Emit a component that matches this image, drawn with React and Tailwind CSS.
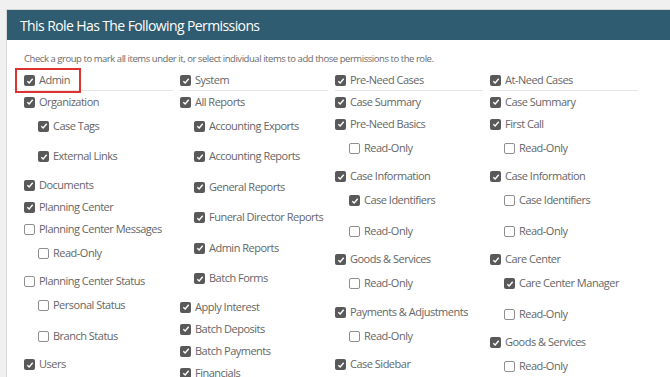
import React from "react";

const columns = [
  {
    title: "Admin",
    flagged: true,
    items: [
      { label: "Organization", checked: true, children: [
        { label: "Case Tags", checked: true },
        { label: "External Links", checked: true },
      ] },
      { label: "Documents", checked: true },
      { label: "Planning Center", checked: true },
      { label: "Planning Center Messages", checked: false, children: [
        { label: "Read-Only", checked: false },
      ] },
      { label: "Planning Center Status", checked: false, children: [
        { label: "Personal Status", checked: false },
        { label: "Branch Status", checked: false },
      ] },
      { label: "Users", checked: true },
    ],
  },
  {
    title: "System",
    items: [
      { label: "All Reports", checked: true, children: [
        { label: "Accounting Exports", checked: true },
        { label: "Accounting Reports", checked: true },
        { label: "General Reports", checked: true },
        { label: "Funeral Director Reports", checked: true },
        { label: "Admin Reports", checked: true },
        { label: "Batch Forms", checked: true },
      ] },
      { label: "Apply Interest", checked: true },
      { label: "Batch Deposits", checked: true },
      { label: "Batch Payments", checked: true },
      { label: "Financials", checked: true },
    ],
  },
  {
    title: "Pre-Need Cases",
    items: [
      { label: "Case Summary", checked: true },
      { label: "Pre-Need Basics", checked: true, children: [
        { label: "Read-Only", checked: false },
      ] },
      { label: "Case Information", checked: true, children: [
        { label: "Case Identifiers", checked: true },
        { label: "Read-Only", checked: false },
      ] },
      { label: "Goods & Services", checked: true, children: [
        { label: "Read-Only", checked: false },
      ] },
      { label: "Payments & Adjustments", checked: true, children: [
        { label: "Read-Only", checked: false },
      ] },
      { label: "Case Sidebar", checked: true },
    ],
  },
  {
    title: "At-Need Cases",
    items: [
      { label: "Case Summary", checked: true },
      { label: "First Call", checked: true, children: [
        { label: "Read-Only", checked: false },
      ] },
      { label: "Case Information", checked: true, children: [
        { label: "Case Identifiers", checked: false },
        { label: "Read-Only", checked: false },
      ] },
      { label: "Care Center", checked: true, children: [
        { label: "Care Center Manager", checked: true },
        { label: "Read-Only", checked: false },
      ] },
      { label: "Goods & Services", checked: true, children: [
        { label: "Read-Only", checked: false },
      ] },
    ],
  },
];

const Box = ({ checked }) =>
  checked ? (
    <span className="w-[11px] h-[11px] shrink-0 rounded-[2px] bg-[#595959] flex items-center justify-center">
      <svg width="8" height="8" viewBox="0 0 8 8">
        <path d="M1.3 4.2 L3.2 6 L6.7 1.8" fill="none" stroke="#ffffff" strokeWidth="1.4" />
      </svg>
    </span>
  ) : (
    <span className="w-[11px] h-[11px] shrink-0 rounded-[2px] border border-[#8f8f8f] bg-white" />
  );

const Row = ({ label, checked }) => (
  <div className="h-[22px] flex items-center gap-[4px] whitespace-nowrap">
    <Box checked={checked} />
    <span>{label}</span>
  </div>
);

const Column = ({ col }) => (
  <div className="pr-[7px]">
    <div className="relative h-[20px] flex items-center gap-[4px] border-b border-[#e6e6e6] whitespace-nowrap">
      <Box checked />
      <span>{col.title}</span>
      {col.flagged && (
        <div className="absolute left-[-9px] top-[-3px] w-[66px] h-[25px] border-2 border-[#e03131]" />
      )}
    </div>
    <div>
      {col.items.map((it, i) => (
        <div key={i}>
          <Row label={it.label} checked={it.checked} />
          {it.children && (
            <div className="pl-[14px]">
              {it.children.map((c, j) => (
                <div key={j} className="pt-[2px] pb-[6.5px]">
                  <Row label={c.label} checked={c.checked} />
                </div>
              ))}
            </div>
          )}
        </div>
      ))}
    </div>
  </div>
);

export default function App() {
  return (
    <div className="h-[377px] w-[670px] overflow-hidden bg-[#f0f0f0] pt-[9px] pl-[6px] font-['Open_Sans',sans-serif]">
      <div className="bg-white border-l border-t border-[#d6d6d6] h-full">
        <div className="h-[30px] bg-[#2f5c70] flex items-center px-[13px] text-white text-[14px] tracking-[-0.6px]">
          This Role Has The Following Permissions
        </div>
        <div className="pl-[17px] pt-[11px]">
          <p className="text-[9.5px] tracking-[-0.45px] text-[#6a6a6a] leading-[16px]">
            Check a group to mark all items under it, or select individual items to add those permissions to the role.
          </p>
          <div className="mt-[4px] grid grid-cols-[156px_155px_155px_155px] text-[11px] tracking-[-0.5px] text-[#666666]">
            {columns.map((col, i) => (
              <Column key={i} col={col} />
            ))}
          </div>
        </div>
      </div>
    </div>
  );
}
